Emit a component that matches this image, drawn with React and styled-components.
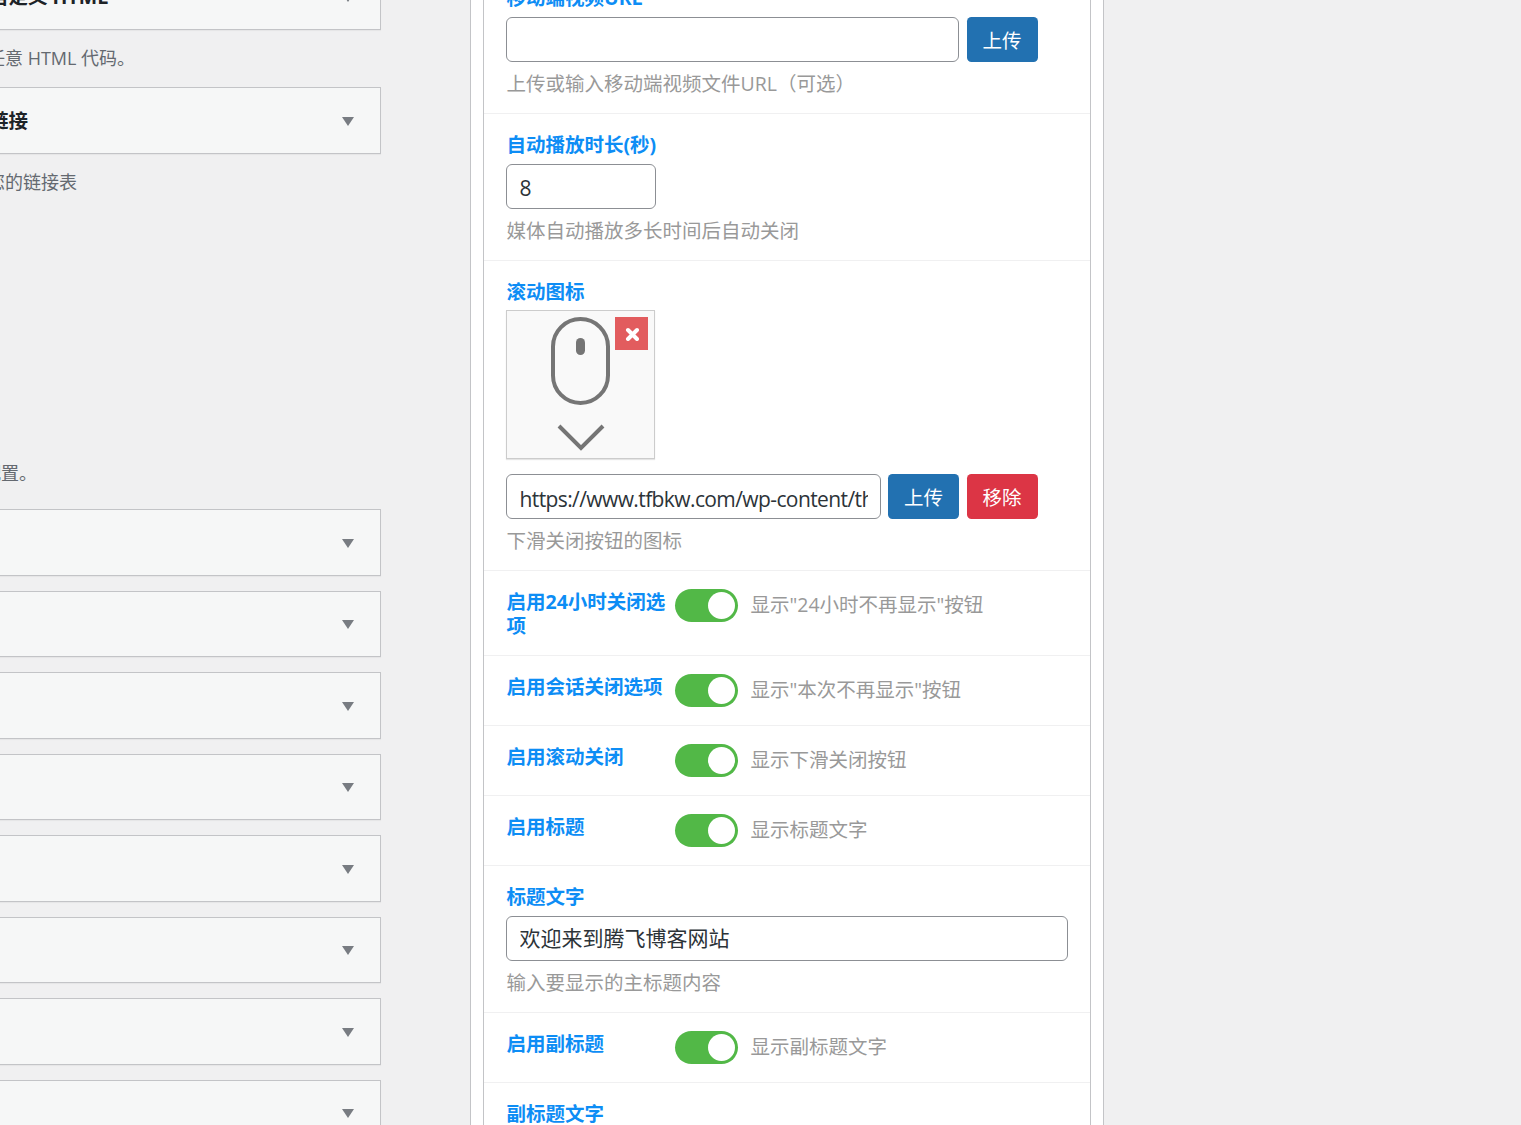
import React from "react";
import styled, { createGlobalStyle } from "styled-components";

const GlobalStyle = createGlobalStyle`
    * {
        box-sizing: border-box;
    }
    body {
        margin: 0;
        background: #f0f0f1;
        font-family: "Open Sans", "Noto Sans CJK SC", sans-serif;
        font-size: 19.5px;
    }
`;

const Toggle = ({ hint }) => (
    <ToggleWrap>
        <Track>
            <Knob />
        </Track>
        <ToggleHint>{hint}</ToggleHint>
    </ToggleWrap>
);

const SwitchRow = ({ label, hint }) => (
    <SwitchLine>
        <SwitchLabel>{label}</SwitchLabel>
        <Toggle hint={hint} />
    </SwitchLine>
);

const App = () => {
    // collapsed boxes below the description
    const boxes = [1, 2, 3, 4, 5, 6, 7, 8];

    return (
        <>
            <GlobalStyle />
            <Page>
                <LeftColumn>
                    <AccordionBox>
                        <BoxTitle>自定义 HTML</BoxTitle>
                        <Caret />
                    </AccordionBox>
                    <Desc>任意 HTML 代码。</Desc>
                    <AccordionBox>
                        <BoxTitle>链接</BoxTitle>
                        <Caret />
                    </AccordionBox>
                    <Desc>您的链接表</Desc>
                    <Desc $gap={264} $indent={23}>配置。</Desc>
                    {boxes.map((id, i) => (
                        <AccordionBox key={id} $first={i === 0}>
                            <Caret />
                        </AccordionBox>
                    ))}
                </LeftColumn>

                <OuterBox>
                    <Panel>
                        <Row>
                            <Label>移动端视频URL</Label>
                            <InputLine>
                                <TextInput $width={453} readOnly value="" />
                                <Button>上传</Button>
                            </InputLine>
                            <Hint>上传或输入移动端视频文件URL（可选）</Hint>
                        </Row>
                        <Row>
                            <Label>自动播放时长(秒)</Label>
                            <TextInput $width={150} $nudge={2} readOnly value="8" />
                            <Hint>媒体自动播放多长时间后自动关闭</Hint>
                        </Row>
                        <Row>
                            <Label>滚动图标</Label>
                            <Preview>
                                <svg width="147" height="147" viewBox="0 0 147 147" fill="none">
                                    <rect x="46" y="8" width="55" height="84" rx="27.5" stroke="#757575" strokeWidth="4" />
                                    <rect x="69" y="27" width="9" height="17" rx="4.5" fill="#757575" />
                                    <path d="M52 115 L74 137 L96 115" stroke="#757575" strokeWidth="4" />
                                </svg>
                                <RemoveBadge>
                                    <svg width="15" height="15" viewBox="0 0 15 15">
                                        <path d="M4 4 L13 13 M13 4 L4 13" stroke="#fff" strokeWidth="4" strokeLinecap="round" />
                                    </svg>
                                </RemoveBadge>
                            </Preview>
                            <UploadLine>
                                <TextInput
                                    $width={375}
                                    $tight
                                    $nudge={4}
                                    readOnly
                                    value="https://www.tfbkw.com/wp-content/themes/images/scroll.png"
                                />
                                <Button>上传</Button>
                                <Button $danger>移除</Button>
                            </UploadLine>
                            <Hint>下滑关闭按钮的图标</Hint>
                        </Row>
                        <SwitchRow label="启用24小时关闭选项" hint={'显示"24小时不再显示"按钮'} />
                        <SwitchRow label="启用会话关闭选项" hint={'显示"本次不再显示"按钮'} />
                        <SwitchRow label="启用滚动关闭" hint="显示下滑关闭按钮" />
                        <SwitchRow label="启用标题" hint="显示标题文字" />
                        <Row>
                            <Label>标题文字</Label>
                            <TextInput $nudge={-3} readOnly value="欢迎来到腾飞博客网站" />
                            <Hint>输入要显示的主标题内容</Hint>
                        </Row>
                        <SwitchRow label="启用副标题" hint="显示副标题文字" />
                        <Row>
                            <Label>副标题文字</Label>
                            <TextInput readOnly value="" />
                        </Row>
                    </Panel>
                </OuterBox>
            </Page>
        </>
    );
};

const Page = styled.div`
    height: 1125px;
    overflow: hidden;
    display: flex;
    align-items: flex-start;
    gap: 89px;
`;

const LeftColumn = styled.div`
    width: 421px;
    margin-left: -40px;
    margin-top: -37px;
    flex-shrink: 0;
`;

const AccordionBox = styled.div`
    height: 66.5px;
    margin-bottom: 15px;
    margin-top: ${(props) => (props.$first ? "22.5px" : "0")};
    padding: 0 26px 0 28px;
    display: flex;
    align-items: center;
    justify-content: space-between;
    background: #f6f7f7;
    border: 1.5px solid #c3c4c7;
    box-shadow: 0 1px 1px rgba(0, 0, 0, 0.04);
`;

const BoxTitle = styled.div`
    margin-top: -1px;
    font-size: 19.5px;
    font-weight: 700;
    color: #1d2327;
`;

const Caret = styled.span`
    margin-left: auto;
    margin-top: 2px;
    width: 0;
    height: 0;
    border-left: 6px solid transparent;
    border-right: 6px solid transparent;
    border-top: 9px solid #787c82;
`;

const Desc = styled.p`
    margin: ${(props) => props.$gap || 0}px 0 15.5px;
    padding-left: ${(props) => props.$indent || 27}px;
    font-size: 18px;
    line-height: 27px;
    color: #646970;
    &:has(+ p) {
        margin-bottom: 0;
    }
`;

const OuterBox = styled.div`
    width: 634px;
    padding: 0 12px;
    margin-top: -33px;
    flex-shrink: 0;
    background: #fff;
    border: 1px solid #c3c4c7;
    border-top: 0;
`;

const Panel = styled.div`
    width: 608px;
    background: #fff;
    border: 1.5px solid #c3c4c7;
    border-top: 0;
    border-right-width: 1px;
`;

const Row = styled.div`
    padding: 18px 22.5px 17px 21.5px;
    border-bottom: 1px solid #f0f0f1;
`;

const Label = styled.div`
    padding: 1px 0 0 1px;
    margin-bottom: 7px;
    font-size: 19.5px;
    line-height: 24px;
    font-weight: 700;
    color: #0d8df5;

    & + ${() => Preview} {
        margin-top: -1px;
    }
`;

const TextInput = styled.input`
    display: block;
    width: ${(props) => (props.$width ? `${props.$width}px` : "100%")};
    height: 45px;
    padding: ${(props) => Math.max(props.$nudge || 0, 0)}px 12px
        ${(props) => Math.max(-(props.$nudge || 0), 0)}px 13px;
    font-family: inherit;
    font-size: 21px;
    letter-spacing: ${(props) => (props.$tight ? "-0.6px" : "0")};
    color: #2c3338;
    background: #fff;
    border: 1.5px solid #8c8f94;
    border-radius: 6px;
    outline: none;
`;

const InputLine = styled.div`
    display: flex;
    gap: 8px;
`;

const UploadLine = styled(InputLine)`
    gap: 7.5px;
    margin-top: 15px;
`;

const Button = styled.button`
    width: 71px;
    height: 45px;
    padding: 0;
    font-family: inherit;
    font-size: 19.5px;
    color: #fff;
    background: ${(props) => (props.$danger ? "#dc3545" : "#2271b1")};
    border: 0;
    border-radius: 4.5px;
`;

const Hint = styled.div`
    margin-top: 10px;
    padding-left: 1px;
    font-size: 19.5px;
    line-height: 24px;
    color: #999;
`;

const Preview = styled.div`
    position: relative;
    width: 149px;
    height: 149px;
    background: #f9f9f9;
    border: 1px solid #ccc;
    box-shadow: 0 1px 1px rgba(0, 0, 0, 0.1);
`;

const RemoveBadge = styled.span`
    position: absolute;
    top: 6px;
    right: 6px;
    width: 33px;
    height: 33px;
    display: flex;
    align-items: center;
    justify-content: center;
    background: #e25c5e;
`;

const SwitchLine = styled.div`
    display: flex;
    align-items: flex-start;
    padding: 18px 22.5px 17px 21.5px;
    border-bottom: 1px solid #f0f0f1;
`;

const SwitchLabel = styled.div`
    width: 169px;
    flex-shrink: 0;
    padding: 1px 8px 0 1px;
    font-size: 19.5px;
    line-height: 24px;
    font-weight: 700;
    color: #0d8df5;
`;

const ToggleWrap = styled.div`
    display: flex;
    align-items: center;
    gap: 13px;
    margin-bottom: 1px;
`;

const Track = styled.div`
    position: relative;
    width: 63px;
    height: 33px;
    background: #52b847;
    border-radius: 17px;
`;

const Knob = styled.span`
    position: absolute;
    top: 3px;
    right: 3px;
    width: 27px;
    height: 27px;
    background: #fff;
    border-radius: 50%;
`;

const ToggleHint = styled.span`
    padding-bottom: 4px;
    font-size: 19.5px;
    color: #999;
`;

export default App;
